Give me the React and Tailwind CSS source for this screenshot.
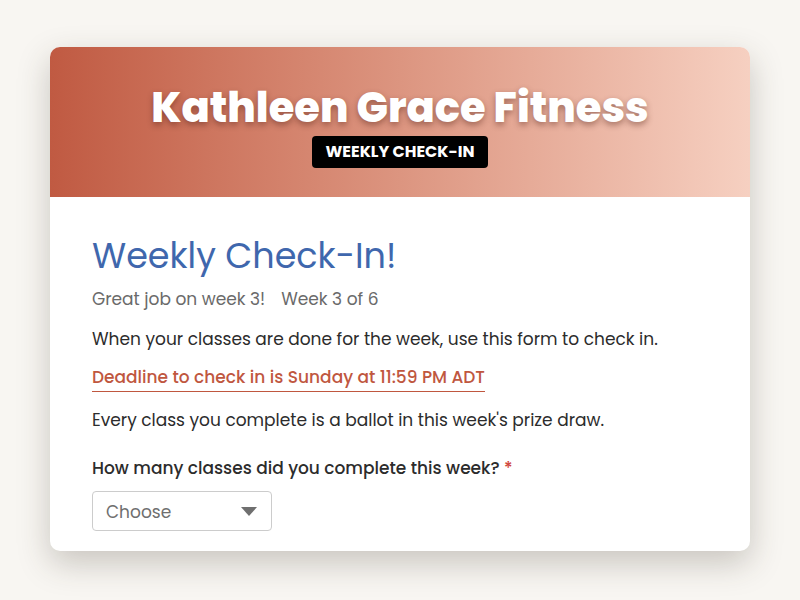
const App = () => {
  return (
    <div className="min-h-screen w-full bg-[#f8f6f2] pt-[47px] font-['Poppins','Open_Sans',sans-serif]">
      <div className="mx-auto w-[700px] h-[504px] overflow-hidden rounded-[10px] bg-white shadow-[0_12px_32px_rgba(60,50,40,0.25)]">
        <div className="h-[150px] flex flex-col items-center pt-[37px] bg-gradient-to-r from-[#c05a42] via-[#dc9580] to-[#f6d0c1]">
          <h1 className="text-[41.6px] leading-[48px] font-extrabold text-white [text-shadow:0_3px_6px_rgba(80,30,20,0.45)]">
            Kathleen Grace Fitness
          </h1>
          <div className="mt-[4px] rounded-[4px] bg-black px-[14px] h-[32px] flex items-center text-[16px] font-bold text-white">
            WEEKLY CHECK-IN
          </div>
        </div>

        <div className="px-[42px] pt-[37px]">
          <h2 className="text-[35px] leading-[44px] text-[#3f67ad]">Weekly Check-In!</h2>
          <p className="mt-[8px] text-[17px] leading-[26px] text-[#6a6a6a]">
            Great job on week 3!<span className="ml-[16px]">Week 3 of 6</span>
          </p>
          <p className="mt-[14px] text-[17px] leading-[26px] text-[#2c2c2c]">
            When your classes are done for the week, use this form to check in.
          </p>
          <p className="mt-[12px] inline-block border-b border-[#c0573f] pb-[1px] text-[17px] leading-[26px] font-medium text-[#c0573f]">
            Deadline to check in is Sunday at 11:59 PM ADT
          </p>
          <p className="mt-[15px] text-[17px] leading-[26px] text-[#2c2c2c]">
            Every class you complete is a ballot in this week's prize draw.
          </p>
          <p className="mt-[22px] text-[17px] leading-[26px] font-medium text-[#2c2c2c]">
            How many classes did you complete this week? <span className="text-[#d0453a]">*</span>
          </p>
          <div className="mt-[10px] w-[180px] h-[40px] rounded-[4px] border border-[#cccccc] flex items-center justify-between pl-[13px] pr-[14px]">
            <span className="text-[17px] leading-[26px] mt-[1px] text-[#6f6f6f]">Choose</span>
            <svg width="16" height="9" viewBox="0 0 16 9"><path d="M0 0h16L8 9z" fill="#6f6f6f" /></svg>
          </div>
        </div>
      </div>
    </div>
  )
}

export default App
